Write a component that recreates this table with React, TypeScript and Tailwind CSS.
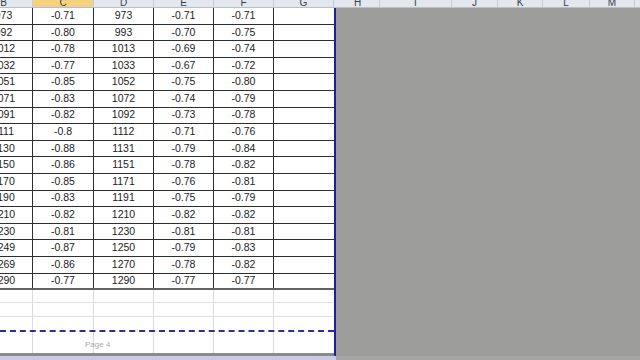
import React from 'react';

const rows = [
  ['973', '-0.71', '973', '-0.71', '-0.71'],
  ['992', '-0.80', '993', '-0.70', '-0.75'],
  ['1012', '-0.78', '1013', '-0.69', '-0.74'],
  ['1032', '-0.77', '1033', '-0.67', '-0.72'],
  ['1051', '-0.85', '1052', '-0.75', '-0.80'],
  ['1071', '-0.83', '1072', '-0.74', '-0.79'],
  ['1091', '-0.82', '1092', '-0.73', '-0.78'],
  ['1111', '-0.8', '1112', '-0.71', '-0.76'],
  ['1130', '-0.88', '1131', '-0.79', '-0.84'],
  ['1150', '-0.86', '1151', '-0.78', '-0.82'],
  ['1170', '-0.85', '1171', '-0.76', '-0.81'],
  ['1190', '-0.83', '1191', '-0.75', '-0.79'],
  ['1210', '-0.82', '1210', '-0.82', '-0.82'],
  ['1230', '-0.81', '1230', '-0.81', '-0.81'],
  ['1249', '-0.87', '1250', '-0.79', '-0.83'],
  ['1269', '-0.86', '1270', '-0.78', '-0.82'],
  ['1290', '-0.77', '1290', '-0.77', '-0.77'],
];

// widths of B..G (B runs off the left edge)
const colW = ['w-[58px] ml-[-25px]', 'w-[61px]', 'w-[60px]', 'w-[60px]', 'w-[60px]', 'w-[60px]'];

const rightCols: [string, string][] = [
  ['H', 'w-[44px]'],
  ['I', 'w-[72px]'],
  ['J', 'w-[46px]'],
  ['K', 'w-[45px]'],
  ['L', 'w-[47px]'],
  ['M', 'w-[45px]'],
];

const LowerRow = ({ h, cls = '' }: { h: string; cls?: string }) => (
  <div className={`flex shrink-0 ${h} ${cls}`}>
    {colW.map((w, i) => (
      <div key={i} className={`${w} shrink-0 border-r border-[#dadada] last:border-r-0`} />
    ))}
  </div>
);

export default function App() {
  return (
    <div className="w-[640px] h-[360px] overflow-hidden bg-[#9d9e9b] flex flex-col font-['Liberation_Sans',sans-serif]">
      {/* column headers */}
      <div className="flex h-[8px] shrink-0 bg-[#e3e8ee] border-b border-[#b6bfcc] text-[10px] leading-[6px] text-[#34404f] overflow-hidden">
        {['B', 'C', 'D', 'E', 'F', 'G'].map((l, i) => (
          <div
            key={l}
            className={`${colW[i]} shrink-0 flex justify-center border-r border-[#c4ccd7] ${i === 1 ? 'bg-[#f7d27c]' : ''}`}
          >
            {l}
          </div>
        ))}
        <div className="w-[2px] shrink-0" />
        {rightCols.map(([l, w]) => (
          <div key={l} className={`${w} shrink-0 flex justify-center border-r border-[#c4ccd7]`}>
            {l}
          </div>
        ))}
      </div>

      <div className="flex h-[348px] shrink-0">
        {/* printed sheet area */}
        <div className="w-[336px] shrink-0 bg-white border-r-2 border-[#1d1ea3] flex flex-col overflow-hidden">
          {rows.map((r, ri) => (
            <div
              key={ri}
              className={`flex h-[16.6px] shrink-0 ${ri === rows.length - 1 ? 'border-b-2 border-[#626262]' : 'border-b border-[#2e2e2e]'}`}
            >
              {[...r, ''].map((v, ci) => (
                <div
                  key={ci}
                  className={`${colW[ci]} shrink-0 flex items-center justify-center text-[10.5px] text-[#1c1c1c] ${ci < 5 ? 'border-r border-[#2e2e2e]' : ''}`}
                >
                  {v}
                </div>
              ))}
            </div>
          ))}
          <LowerRow h="h-[13px]" cls="border-b border-[#e0e0e0]" />
          <LowerRow h="h-[14px]" cls="border-b border-[#e0e0e0]" />
          <LowerRow h="h-[15px]" cls="border-b-2 border-dashed border-[#2b2f9c]" />
          <div className="relative shrink-0">
            <LowerRow h="h-[24px]" cls="border-b-[3px] border-[#8a8a8a]" />
            {/* page number watermark of page-break preview */}
            <span className="absolute left-[85px] top-[8px] text-[8px] leading-[9px] text-[#a8a8a8]">Page 4</span>
          </div>
        </div>
        <div className="flex-1" />
      </div>
      <div className="flex flex-1">
        <div className="w-[336px] bg-[#c9cbe6]" />
        <div className="flex-1 bg-[#a5a6a4]" />
      </div>
    </div>
  );
}
